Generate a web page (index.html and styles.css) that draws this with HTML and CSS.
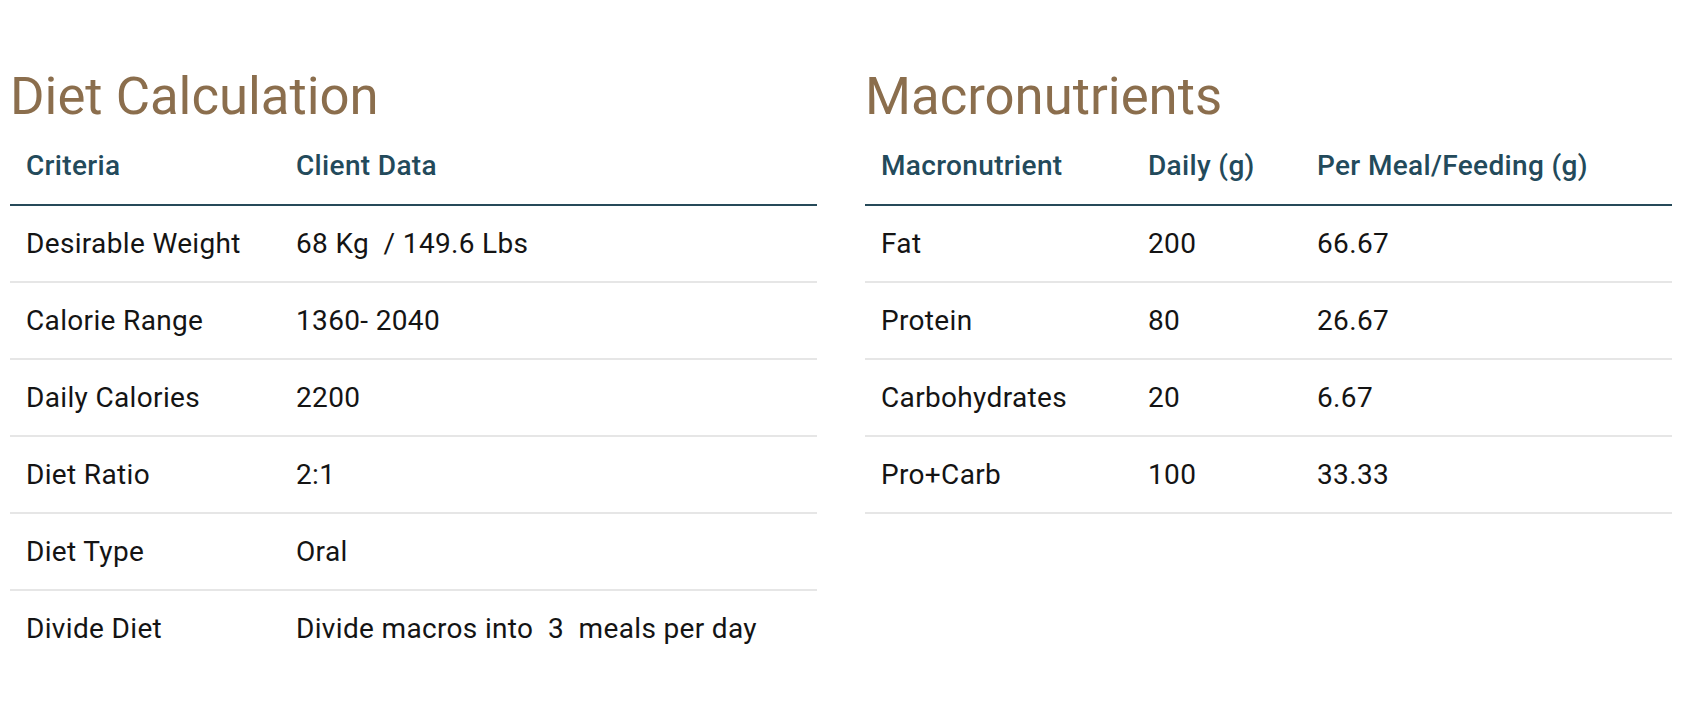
FILE: index.html
```html
<!DOCTYPE html>
<html lang="en">
<head>
<meta charset="utf-8">
<title>Diet Calculation</title>
<link rel="stylesheet" href="styles.css">
</head>
<body>
<main class="page">
  <section class="panel">
    <h2 class="panel-title">Diet Calculation</h2>
    <table class="data-table">
      <colgroup><col class="c-criteria"><col></colgroup>
      <thead>
        <tr><th>Criteria</th><th>Client Data</th></tr>
      </thead>
      <tbody>
        <tr><td>Desirable Weight</td><td class="pre">68 Kg  / 149.6 Lbs</td></tr>
        <tr><td>Calorie Range</td><td>1360- 2040</td></tr>
        <tr><td>Daily Calories</td><td>2200</td></tr>
        <tr><td>Diet Ratio</td><td>2:1</td></tr>
        <tr><td>Diet Type</td><td>Oral</td></tr>
        <tr class="last"><td>Divide Diet</td><td class="pre">Divide macros into  3  meals per day</td></tr>
      </tbody>
    </table>
  </section>
  <section class="panel">
    <h2 class="panel-title">Macronutrients</h2>
    <table class="data-table">
      <colgroup><col class="c-macro"><col class="c-daily"><col></colgroup>
      <thead>
        <tr><th>Macronutrient</th><th>Daily (g)</th><th>Per Meal/Feeding (g)</th></tr>
      </thead>
      <tbody>
        <tr><td>Fat</td><td>200</td><td>66.67</td></tr>
        <tr><td>Protein</td><td>80</td><td>26.67</td></tr>
        <tr><td>Carbohydrates</td><td>20</td><td>6.67</td></tr>
        <tr><td>Pro+Carb</td><td>100</td><td>33.33</td></tr>
      </tbody>
    </table>
  </section>
</main>
</body>
</html>
```
FILE: styles.css
```css
* { box-sizing: border-box; }
html, body { margin: 0; padding: 0; background: #ffffff; }
body {
  font-family: Roboto, "Liberation Sans", Arial, sans-serif;
  color: #111111;
}
.page {
  display: flex;
  gap: 48px;
  padding: 0 10px;
}
.panel {
  flex: 1 1 0;
  min-width: 0;
}
.panel-title {
  margin: 65px 0 0 0;
  font-size: 52.7px;
  line-height: 63px;
  font-weight: 400;
  color: #8b6e4d;
}
.data-table {
  width: 100%;
  border-collapse: collapse;
  table-layout: fixed;
}
.c-criteria { width: 270px; }
.c-macro { width: 267px; }
.c-daily { width: 169px; }
.data-table th,
.data-table td {
  height: 77px;
  padding: 0 16px;
  text-align: left;
  vertical-align: middle;
  font-size: 28px;
  letter-spacing: 0.34px;
  line-height: 32px;
}
.data-table th {
  font-weight: 500;
  color: #234a5b;
  border-bottom: 2px solid #264a59;
}
.data-table td {
  color: #141414;
  border-bottom: 2px solid #e6e6e6;
}
.data-table tr.last td { border-bottom: none; }
.pre { white-space: pre; }
```
